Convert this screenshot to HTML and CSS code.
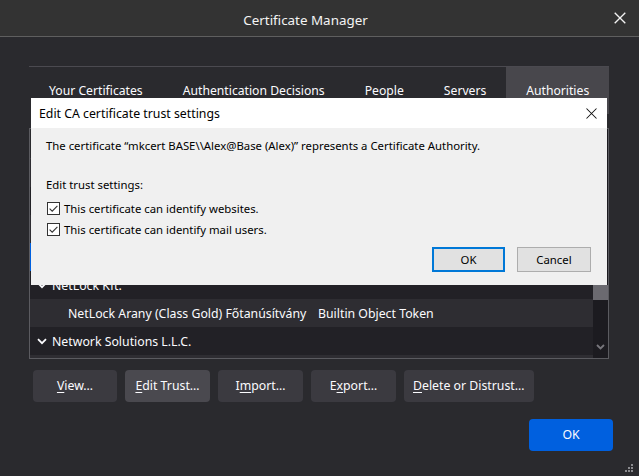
FILE: index.html
```html
<!DOCTYPE html>
<html lang="en">
<head>
<meta charset="utf-8">
<title>Certificate Manager</title>
<link rel="stylesheet" href="styles.css">
</head>
<body>
<div class="window">
  <header class="titlebar">
    <span class="title">Certificate Manager</span>
    <span class="win-close">
      <svg width="12" height="12" viewBox="0 0 12 12"><path d="M0.7 0.7L11.3 11.3M11.3 0.7L0.7 11.3" stroke="#f2f2f2" stroke-width="1.35" fill="none"/></svg>
    </span>
  </header>

  <main class="content">
    <div class="tabbox">
      <nav class="tabs">
        <div class="tab">Your Certificates</div>
        <div class="tab">Authentication Decisions</div>
        <div class="tab">People</div>
        <div class="tab">Servers</div>
        <div class="tab selected">Authorities</div>
      </nav>
      <div class="tabpanel">
        <div class="tree">
          <div class="tree-main">
            <div class="tree-head"></div>
            <div class="tree-body">
              <div class="row group odd"></div>
              <div class="row child"></div>
              <div class="row group odd"></div>
              <div class="row child selected"></div>
              <div class="row group"><span class="chev"><svg width="10" height="7" viewBox="0 0 10 7"><path d="M1 1.2L5 5.2L9 1.2" stroke="#fbfbfe" stroke-width="1.8" fill="none"/></svg></span><span class="col-name">NetLock Kft.</span></div>
              <div class="row child odd"><span class="col-name">NetLock Arany (Class Gold) Főtanúsítvány</span><span class="col-dev">Builtin Object Token</span></div>
              <div class="row group"><span class="chev"><svg width="10" height="7" viewBox="0 0 10 7"><path d="M1 1.2L5 5.2L9 1.2" stroke="#fbfbfe" stroke-width="1.8" fill="none"/></svg></span><span class="col-name">Network Solutions L.L.C.</span></div>
              <div class="row child odd"></div>
            </div>
          </div>
          <div class="scrollbar">
            <div class="thumb"></div>
            <div class="arrow">
              <svg width="9" height="6" viewBox="0 0 9 6"><path d="M1 1L4.5 4.5L8 1" stroke="#77767c" stroke-width="1.8" fill="none"/></svg>
            </div>
          </div>
        </div>
        <div class="actions">
          <button class="btn"><u>V</u>iew…</button>
          <button class="btn hover"><u>E</u>dit Trust…</button>
          <button class="btn">I<u>m</u>port…</button>
          <button class="btn">E<u>x</u>port…</button>
          <button class="btn wide"><u>D</u>elete or Distrust…</button>
        </div>
      </div>
    </div>
    <div class="footer">
      <button class="btn primary">OK</button>
    </div>
  </main>

  <div class="grip">
    <svg width="8" height="8" viewBox="0 0 8 8" fill="#8a8a8e"><rect x="6" y="0" width="2" height="2"/><rect x="3" y="3" width="2" height="2"/><rect x="6" y="3" width="2" height="2"/><rect x="0" y="6" width="2" height="2"/><rect x="3" y="6" width="2" height="2"/><rect x="6" y="6" width="2" height="2"/></svg>
  </div>

  <section class="dialog">
    <div class="dlg-title">
      <span>Edit CA certificate trust settings</span>
      <span class="dlg-close">
        <svg width="11" height="11" viewBox="0 0 11 11"><path d="M0.5 0.5L10.5 10.5M10.5 0.5L0.5 10.5" stroke="#111" stroke-width="1.05" fill="none"/></svg>
      </span>
    </div>
    <div class="dlg-body">
      <p class="dlg-desc">The certificate “mkcert BASE\\Alex@Base (Alex)” represents a Certificate Authority.</p>
      <p class="dlg-label">Edit trust settings:</p>
      <label class="check"><span class="box"><svg width="11" height="11" viewBox="0 0 11 11"><path d="M1.6 5.6L4.2 8.2L9.4 2.8" stroke="#333" stroke-width="1.1" fill="none"/></svg></span>This certificate can identify websites.</label>
      <label class="check"><span class="box"><svg width="11" height="11" viewBox="0 0 11 11"><path d="M1.6 5.6L4.2 8.2L9.4 2.8" stroke="#333" stroke-width="1.1" fill="none"/></svg></span>This certificate can identify mail users.</label>
      <div class="dlg-buttons">
        <button class="wbtn default">OK</button>
        <button class="wbtn">Cancel</button>
      </div>
    </div>
  </section>
</div>
</body>
</html>
```

FILE: styles.css
```css
* { box-sizing: border-box; }

html, body {
  margin: 0;
  padding: 0;
}

body {
  width: 639px;
  height: 476px;
  overflow: hidden;
  background: #2a2a2e;
  font-family: "Noto Sans", "Open Sans", sans-serif;
  color: #fbfbfe;
}

.window {
  position: relative;
  width: 639px;
  height: 476px;
  background: #2a2a2e;
}

/* ---------- title bar ---------- */
.titlebar {
  height: 37px;
  background: #333333;
  border-bottom: 1px solid #5f5f5f;
  display: flex;
  align-items: center;
  gap: 3px;
  padding: 3px 13px 0 0;
}
.title {
  flex: 1;
  text-align: center;
  font-size: 13.4px;
  color: #f4f4f4;
  white-space: nowrap;
}
.win-close {
  display: flex;
  margin-top: -3px;
}

/* ---------- main content ---------- */
.content {
  padding: 29px 26px 0 29px;
}
.tabbox {
  margin-right: 4px;
}
.tabs {
  display: flex;
  height: 48px;
  border-top: 1px solid #4b4a50;
}
.tab {
  display: flex;
  align-items: center;
  flex-shrink: 0;
  white-space: nowrap;
  padding: 0 20px 1px;
  font-size: 12.2px;
  color: #fbfbfe;
}
.tab.selected {
  background: #48474c;
  flex: 1 1 auto;
  justify-content: center;
  padding: 0 0 1px;
}

.tabpanel {
  padding-top: 14px;
}

.tree {
  display: flex;
  height: 231px;
  border: 1px solid #5b5b60;
  background: #1f1e23;
}
.tree-main {
  flex: 1;
  overflow: hidden;
}
.tree-head {
  height: 30px;
  background: #2a2a2e;
  border-bottom: 1px solid #3a393f;
}
.tree-body {
  overflow: hidden;
}
.row {
  height: 28px;
  display: flex;
  align-items: center;
  font-size: 12.3px;
  background: #222126;
  white-space: nowrap;
}
.row.odd { background: #2e2d32; }
.row.selected { background: #0060df; }
.row .chev {
  width: 22px;
  padding-left: 7px;
  display: flex;
  align-items: center;
}
.row.child .col-name {
  padding-left: 38px;
  width: 288px;
}

.scrollbar {
  width: 15px;
  background: #1c1b20;
  display: flex;
  flex-direction: column;
  justify-content: space-between;
  padding-top: 156px;
}
.thumb {
  height: 15px;
  background: #6b6a70;
}
.arrow {
  height: 18px;
  display: flex;
  justify-content: center;
  align-items: flex-start;
  padding-top: 4px;
}

/* ---------- buttons ---------- */
.actions {
  display: flex;
  gap: 8px;
  padding-left: 4px;
  margin-top: 11px;
}
.btn {
  height: 32px;
  min-width: 85px;
  padding: 0 9px 1px;
  border: none;
  border-radius: 4px;
  background: #3b3a40;
  color: #fbfbfe;
  font-family: "Noto Sans", "Open Sans", sans-serif;
  font-size: 12.3px;
  white-space: nowrap;
}
.btn:first-child { min-width: 84px; }
.btn u { text-underline-offset: 2px; }
.btn.hover { background: #4a494f; }
.btn.primary {
  min-width: 84px;
  background: #0060df;
  color: #fbfbfe;
}
.footer {
  display: flex;
  justify-content: flex-end;
  margin-top: 17px;
}

.grip {
  position: absolute;
  right: 6px;
  bottom: 4px;
  display: flex;
}

/* ---------- modal dialog ---------- */
.dialog {
  position: absolute;
  left: 31px;
  top: 98px;
  width: 576px;
  height: 187px;
  background: #f0f0f0;
  color: #000;
  font-family: "Noto Sans", "Open Sans", sans-serif;
  font-size: 11.35px;
  display: flex;
  flex-direction: column;
}
.dlg-title {
  height: 30px;
  background: #ffffff;
  display: flex;
  align-items: center;
  justify-content: space-between;
  padding: 0 10px 0 8px;
  font-size: 12.3px;
  color: #000;
}
.dlg-close { display: flex; }
.dlg-body {
  flex: 1;
  padding: 10px 16px 0 15px;
  display: flex;
  flex-direction: column;
}
.dlg-desc {
  margin: 0;
  line-height: 16px;
  white-space: nowrap;
}
.dlg-label {
  margin: 23px 0 0;
  line-height: 16px;
}
.check {
  display: flex;
  align-items: center;
  height: 21px;
  padding-left: 1px;
}
.check:first-of-type { margin-top: 5px; }
.box {
  width: 13px;
  height: 13px;
  border: 1px solid #333;
  background: #fff;
  display: flex;
  align-items: center;
  justify-content: center;
  margin-right: 4px;
}
.dlg-buttons {
  display: flex;
  justify-content: flex-end;
  gap: 12px;
  margin-top: 7px;
}
.wbtn {
  width: 74px;
  height: 25px;
  background: #e1e1e1;
  border: 1px solid #adadad;
  font-family: "Noto Sans", "Open Sans", sans-serif;
  font-size: 11.35px;
  color: #000;
  padding: 0;
}
.wbtn.default {
  width: 73px;
  border: 2px solid #0078d7;
}
```
